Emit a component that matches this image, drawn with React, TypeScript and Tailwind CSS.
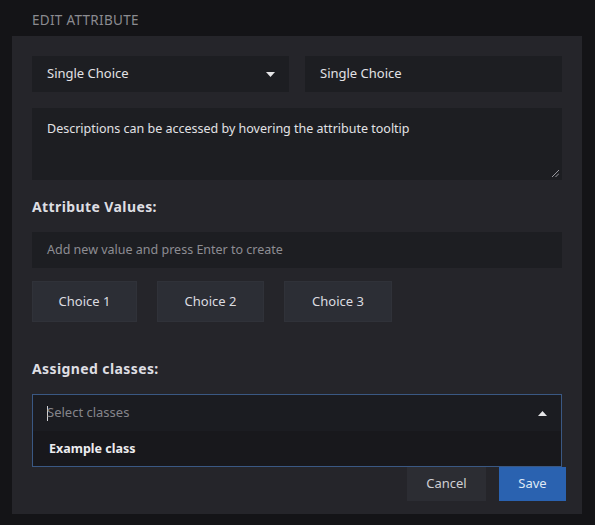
import React from "react";

function Caret({ up }: { up?: boolean }) {
  return (
    <svg width="9" height="5" viewBox="0 0 9 5" className="block">
      {up ? <path d="M0 5 L4.5 0 L9 5 Z" fill="#e5e5e7" /> : <path d="M0 0 L9 0 L4.5 5 Z" fill="#e5e5e7" />}
    </svg>
  );
}

export default function App() {
  return (
    <div
      className="w-[595px] h-[525px] bg-[#141417] overflow-hidden text-[#d9d9dc]"
      style={{ fontFamily: '"Noto Sans", "Open Sans", sans-serif' }}
    >
      <div className="h-[36px] pl-[32px] pt-[5px] flex items-center text-[13.5px] tracking-[0.3px] text-[#8b8b90] uppercase">
        Edit Attribute
      </div>
      <div className="ml-[12px] w-[570px] h-[478px] bg-[#25252a] px-[20px] pt-[20px]">
        <div className="grid grid-cols-2 gap-[16px]">
          <div className="h-[36px] bg-[#1d1e22] flex items-center justify-between pl-[15px] pr-[14px] text-[13px] text-[#e2e2e5]">
            <span>Single Choice</span>
            <Caret />
          </div>
          <div className="h-[36px] bg-[#1d1e22] flex items-center pl-[15px] text-[13px] text-[#e2e2e5]">
            Single Choice
          </div>
        </div>
        <div className="relative mt-[16px] h-[72px] bg-[#1d1e22] pl-[15px] pt-[12px] text-[12.5px] text-[#e2e2e5]">
          Descriptions can be accessed by hovering the attribute tooltip
          <svg width="7" height="7" viewBox="0 0 7 7" className="absolute right-[3px] bottom-[3px]">
            <path d="M7 0 L0 7 M7 3.5 L3.5 7" stroke="#9a9aa0" strokeWidth="1" />
          </svg>
        </div>
        <div className="mt-[16px] h-[20px] flex items-center text-[14px] font-bold text-[#dedee2] tracking-[0.4px]">
          Attribute Values:
        </div>
        <div className="mt-[16px] h-[36px] bg-[#1d1e22] flex items-center pl-[15px] text-[12.5px] text-[#8d8d93]">
          Add new value and press Enter to create
        </div>
        <div className="mt-[13px] flex gap-[20px]">
          {["Choice 1", "Choice 2", "Choice 3"].map((c, i) => (
            <div
              key={c}
              className={
                (i === 0 ? "w-[105px] " : i === 1 ? "w-[107px] " : "w-[108px] ") +
                "h-[41px] bg-[#2c2e35] border border-[#303239] flex items-center justify-center text-[13px] text-[#dcdce0]"
              }
            >
              {c}
            </div>
          ))}
        </div>
        <div className="mt-[36px] h-[20px] flex items-center text-[14px] font-bold text-[#dedee2] tracking-[0.4px]">
          Assigned classes:
        </div>
        <div className="mt-[16px] border border-[#3a5883] bg-[#18181c]">
          <div className="h-[36px] bg-[#1b1c21] flex items-center justify-between pl-[14px] pr-[14px]">
            <div className="flex items-center text-[13px] text-[#85858b]">
              <span className="w-px h-[15px] bg-[#d0d0d4] mr-[-1px]" />
              <span>Select classes</span>
            </div>
            <Caret up />
          </div>
          <div className="h-[35px] flex items-center pl-[16px] pt-[2px] text-[12.5px] font-bold text-[#ececef]">
            Example class
          </div>
        </div>
        <div className="flex justify-end gap-[13px] mr-[-4px]">
          <div className="w-[79px] h-[34px] bg-[#2c2d33] flex items-center justify-center text-[13px] text-[#cfcfd3]">
            Cancel
          </div>
          <div className="w-[67px] h-[34px] bg-[#2a62b0] flex items-center justify-center text-[13px] text-[#dfe8f5]">
            Save
          </div>
        </div>
      </div>
    </div>
  );
}
